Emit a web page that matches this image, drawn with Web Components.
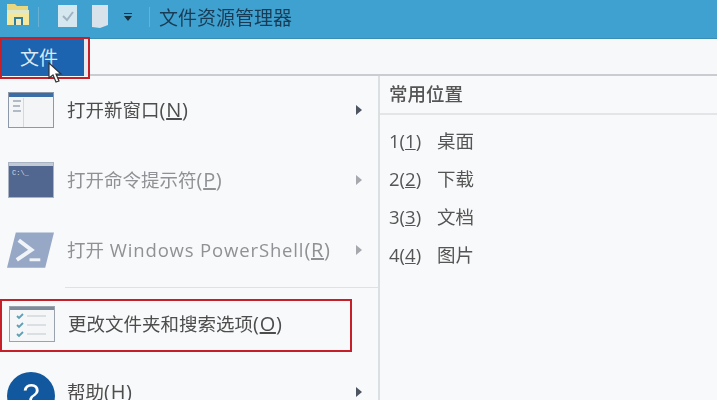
<!DOCTYPE html>
<html lang="zh">
<head>
<meta charset="utf-8">
<style>
  html, body { margin: 0; height: 400px; overflow: hidden; background: #f8f9fa; }
  body { font-family: "Noto Sans CJK SC", "Noto Sans", sans-serif; }
  .k { font-size: 20px; letter-spacing: .7px; }
</style>
</head>
<body>
<explorer-window></explorer-window>

<template id="title-tpl">
  <style>
    :host { display: flex; align-items: center; height: 39px; background: #3fa1d0; border-bottom: 1px solid #3a8db5; box-sizing: border-box; padding: 0 0 5px 6px; color: #163a52; }
    svg { display: block; flex: none; }
    .sep { width: 1px; height: 20px; background: #67b2d4; flex: none; }
    .title { font-size: 19px; margin-left: 9px; color: #183c55; white-space: nowrap; }
  </style>
  <svg width="24" height="22" viewBox="0 0 24 22" style="margin-top:-4px"><path d="M1 0h8l2 2h11v4H1z" fill="#e8d77f"/><path d="M1 6h22v15H1z" fill="#f5e89a"/><path d="M1 6h22v3H1z" fill="#dfe8c8"/><path d="M8 13h9v8H8z" fill="#2f7f9d"/><path d="M10 15h5v6h-5z" fill="#f3ecc0"/></svg>
  <div class="sep" style="margin-left:8px"></div>
  <svg width="19" height="24" viewBox="0 0 19 24" style="margin-left:19px"><path d="M0 0h19v22H0z" fill="#d5e8ef"/><path d="M5 11l4 4 6-8" fill="none" stroke="#9fb3c1" stroke-width="2"/></svg>
  <svg width="16" height="24" viewBox="0 0 16 24" style="margin-left:15px"><path d="M0 0h16v20l-8 3-8-1z" fill="#d8e2ea"/></svg>
  <svg width="10" height="10" viewBox="0 0 10 10" style="margin-left:15px"><path d="M1 1h8v1H1zM1 4h8L5 9z" fill="#15303f"/></svg>
  <div class="sep" style="margin-left:16px"></div>
  <div class="title"><slot></slot></div>
</template>

<template id="ribbon-tpl">
  <style>
    :host { display: flex; height: 37px; background: #f7f8fa; border-bottom: 2px solid #c9ccd1; box-sizing: border-box; position: relative; }
    .file { width: 86px; margin: 0 0 0 2px; height: 37px; background: #1c64b0; color: #dbe9f5; font-size: 19px; display: flex; align-items: center; justify-content: center; padding: 0 8px 2px 0; box-sizing: border-box; border-right: 4px solid #e6e9ee; }
    .mark { position: absolute; left: 0; top: -2px; width: 90px; height: 42px; border: 2px solid #c5202a; box-sizing: border-box; }
    svg { position: absolute; left: 48px; top: 23px; }
  </style>
  <div class="file"><slot></slot></div>
  <div class="mark"></div>
  <svg width="16" height="22" viewBox="0 0 16 22"><path d="M1 1l0 15 4-3 3 7 3-1-3-7h5z" fill="#fff" stroke="#333" stroke-width="1.2"/></svg>
</template>

<template id="item-tpl">
  <style>
    :host { display: flex; flex: none; align-items: center; height: 70px; padding-left: 7px; color: #4d4d4d; font-size: 18.500px; position: relative; box-sizing: border-box; }
    :host([dim]) { color: #8f9194; }
    .icon { width: 47px; height: 38px; flex: none; display: flex; align-items: center; justify-content: center; }
    .label { margin: 0 0 1px 13px; flex: 1; white-space: nowrap; font-family: "Open Sans", "Noto Sans CJK SC", sans-serif; }
    .arrow { width: 0; height: 0; border-left: 6px solid #4d5560; border-top: 5px solid transparent; border-bottom: 5px solid transparent; margin-right: 16px; flex: none; }
    :host([dim]) .arrow { border-left-color: #a5a8ac; }
    :host([noarrow]) .arrow { display: none; }
  </style>
  <div class="icon"><slot name="icon"></slot></div>
  <div class="label"><slot></slot></div>
  <div class="arrow"></div>
</template>

<template id="place-tpl">
  <style>
    :host { display: flex; align-items: center; height: 38px; color: #555; font-size: 18.500px; font-family: "Open Sans", "Noto Sans CJK SC", sans-serif; }
    .n { width: 48px; flex: none; }
  </style>
  <div class="n"><slot name="n"></slot></div>
  <slot></slot>
</template>

<template id="window-tpl">
  <style>
    :host { display: block; width: 717px; height: 400px; overflow: hidden; filter: blur(.35px); }
    .body { display: grid; grid-template-columns: 380px 1fr; height: 324px; }
    .left { border-right: 2px solid #dcdfe2; display: flex; flex-direction: column; min-height: 0; margin-top: -1px; box-sizing: border-box; }
    .rule { height: 1px; background: #dfe1e3; margin: 2px 0 0 65px; flex: none; }
    .boxed { margin-top: 11px; height: 53px; width: 352px; border: 2px solid #c5202a; box-sizing: border-box; flex: none; }
    .right { display: flex; flex-direction: column; }
    .head { height: 39px; box-sizing: border-box; border-bottom: 2px solid #e3e5e8; padding: 0 0 3px 9px; display: flex; align-items: center; color: #555; font-size: 18.500px; font-weight: 500; }
    .list { padding: 6px 0 0 9px; }
  </style>
  <slot name="title"></slot>
  <slot name="ribbon"></slot>
  <div class="body">
    <div class="left">
      <slot name="top"></slot>
      <div class="rule"></div>
      <div class="boxed"><slot name="boxed"></slot></div>
      <slot name="bottom"></slot>
    </div>
    <div class="right">
      <div class="head"><slot name="head"></slot></div>
      <div class="list"><slot name="places"></slot></div>
    </div>
  </div>
</template>

<script>
function simple(tag, tplId) {
  customElements.define(tag, class extends HTMLElement {
    constructor() {
      super();
      this.attachShadow({ mode: 'open' }).appendChild(document.getElementById(tplId).content.cloneNode(true));
    }
  });
}
simple('title-bar', 'title-tpl');
simple('ribbon-bar', 'ribbon-tpl');
simple('menu-item', 'item-tpl');
simple('place-row', 'place-tpl');

class ExplorerWindow extends HTMLElement {
  constructor() {
    super();
    this.attachShadow({ mode: 'open' }).appendChild(document.getElementById('window-tpl').content.cloneNode(true));
  }
  connectedCallback() {
    this.innerHTML = `
      <title-bar slot="title">文件资源管理器</title-bar>
      <ribbon-bar slot="ribbon">文件</ribbon-bar>
      <menu-item slot="top">
        <svg slot="icon" width="46" height="36" viewBox="0 0 46 36"><rect x=".5" y=".5" width="45" height="35" fill="#f4f5f6" stroke="#8d99a8"/><rect x="1" y="1" width="44" height="4" fill="#3c6ea6"/><path d="M5 9h8M5 14h7M5 19h8" stroke="#9aa7b5" stroke-width="1.500"/><path d="M15.500 6v29" stroke="#d5d9de"/></svg>
        打开新窗口<span class="k">(<u>N</u>)</span>
      </menu-item>
      <menu-item slot="top" dim>
        <svg slot="icon" width="46" height="36" viewBox="0 0 46 36"><rect x=".5" y=".5" width="45" height="35" fill="#51678f" stroke="#a9b3c3"/><path d="M1 1h44v3H1z" fill="#c4cad4"/><text x="4" y="13" font-size="7" fill="#d9dee7" font-family="Liberation Mono">C:\\_</text></svg>
        打开命令提示符<span class="k">(<u>P</u>)</span>
      </menu-item>
      <menu-item slot="top" dim>
        <svg slot="icon" width="48" height="36" viewBox="0 0 48 36"><path d="M9 0h39l-9 36H0z" fill="#96a8c6"/><path d="M12 8l13 10-15 10" fill="none" stroke="#f0f4f8" stroke-width="4"/><path d="M23 28h11" stroke="#f0f4f8" stroke-width="3"/></svg>
        打开 <span style="margin-left:1px;letter-spacing:.85px">Windows PowerShell</span><span class="k">(<u>R</u>)</span>
      </menu-item>
      <menu-item slot="boxed" noarrow style="height:49px;padding-left:6px;margin-top:-2px">
        <svg slot="icon" width="46" height="36" viewBox="0 0 46 36"><rect x=".5" y=".5" width="45" height="35" fill="#f4f6f7" stroke="#9aa3ad"/><rect x="1" y="1" width="44" height="3" fill="#7d8b9b"/><path d="M8 10l2 2 4-4M8 19l2 2 4-4M8 28l2 2 4-4" fill="none" stroke="#5f9fb5" stroke-width="1.800"/><path d="M18 10h19M18 19h19M18 28h19" stroke="#c2c8ce"/></svg>
        更改文件夹和搜索选项<span class="k">(<u>O</u>)</span>
      </menu-item>
      <menu-item slot="bottom" style="margin-top:5px">
        <svg slot="icon" width="48" height="48" viewBox="0 0 48 48" style="margin-top:8px;flex:none"><circle cx="24" cy="24" r="24" fill="#12589f"/><text x="24" y="34" font-size="31" text-anchor="middle" fill="#fff" font-family="Liberation Sans">?</text></svg>
        帮助<span class="k">(<u>H</u>)</span>
      </menu-item>
      <span slot="head">常用位置</span>
      <place-row slot="places"><span slot="n">1(<u>1</u>)</span>桌面</place-row>
      <place-row slot="places"><span slot="n">2(<u>2</u>)</span>下载</place-row>
      <place-row slot="places"><span slot="n">3(<u>3</u>)</span>文档</place-row>
      <place-row slot="places"><span slot="n">4(<u>4</u>)</span>图片</place-row>
    `;
  }
}
customElements.define('explorer-window', ExplorerWindow);
</script>
</body>
</html>
